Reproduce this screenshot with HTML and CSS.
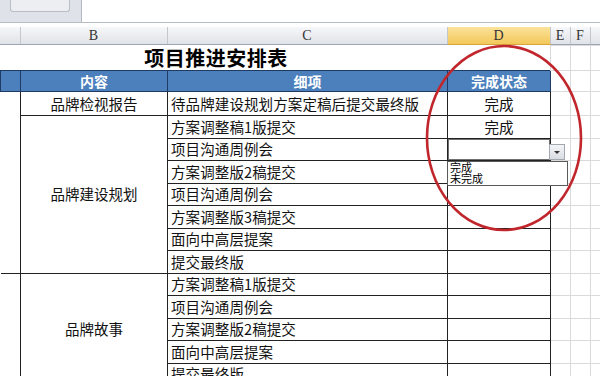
FILE: index.html
```html
<!DOCTYPE html>
<html lang="zh-CN">
  <head>
    <meta charset="UTF-8">
    <meta name="viewport" content="width=device-width, initial-scale=1.0">
    <title>项目推进安排表</title>
    <link rel="stylesheet" href="styles.css">
  </head>
  <body>
    <div class="sheet">
      <!-- ribbon remains / name box strip -->
      <div class="topbar">
        <div class="namebox"><div class="tab"></div></div>
      </div>

      <!-- column letters -->
      <table class="grid colheads">
        <colgroup>
          <col class="c-a"><col class="c-b"><col class="c-c"><col class="c-d"><col class="c-e"><col class="c-f"><col class="c-g">
        </colgroup>
        <tr>
          <th></th><th>B</th><th>C</th><th class="sel">D</th><th>E</th><th>F</th><th>G</th>
        </tr>
      </table>

      <!-- worksheet body -->
      <table class="grid cells">
        <colgroup>
          <col class="c-a"><col class="c-b"><col class="c-c"><col class="c-d"><col class="c-e"><col class="c-f"><col class="c-g">
        </colgroup>
        <tr class="title-row">
          <td colspan="3" class="title">项目推进安排表</td>
          <td class="blank"></td><td class="gl"></td><td class="gl"></td><td class="gl"></td>
        </tr>
        <tr class="head-row">
          <td></td><td>内容</td><td>细项</td><td>完成状态</td><td class="gl"></td><td class="gl"></td><td class="gl"></td>
        </tr>

        <tr class="first">
          <td rowspan="8" class="col-a"></td>
          <td class="group">品牌检视报告</td>
          <td class="item">待品牌建设规划方案定稿后提交最终版</td>
          <td class="state">完成</td>
          <td class="gl"></td><td class="gl"></td><td class="gl"></td>
        </tr>
        <tr>
          <td rowspan="7" class="group">品牌建设规划</td>
          <td class="item">方案调整稿1版提交</td>
          <td class="state">完成</td>
          <td class="gl"></td><td class="gl"></td><td class="gl"></td>
        </tr>
        <tr>
          <td class="item">项目沟通周例会</td>
          <td class="state active"></td>
          <td class="gl"></td><td class="gl"></td><td class="gl"></td>
        </tr>
        <tr>
          <td class="item">方案调整版2稿提交</td>
          <td class="state"></td>
          <td class="gl"></td><td class="gl"></td><td class="gl"></td>
        </tr>
        <tr>
          <td class="item">项目沟通周例会</td>
          <td class="state"></td>
          <td class="gl"></td><td class="gl"></td><td class="gl"></td>
        </tr>
        <tr>
          <td class="item">方案调整版3稿提交</td>
          <td class="state"></td>
          <td class="gl"></td><td class="gl"></td><td class="gl"></td>
        </tr>
        <tr>
          <td class="item">面向中高层提案</td>
          <td class="state"></td>
          <td class="gl"></td><td class="gl"></td><td class="gl"></td>
        </tr>
        <tr>
          <td class="item">提交最终版</td>
          <td class="state"></td>
          <td class="gl"></td><td class="gl"></td><td class="gl"></td>
        </tr>

        <tr>
          <td rowspan="5" class="col-a"></td>
          <td rowspan="5" class="group">品牌故事</td>
          <td class="item">方案调整稿1版提交</td>
          <td class="state"></td>
          <td class="gl"></td><td class="gl"></td><td class="gl"></td>
        </tr>
        <tr>
          <td class="item">项目沟通周例会</td>
          <td class="state"></td>
          <td class="gl"></td><td class="gl"></td><td class="gl"></td>
        </tr>
        <tr>
          <td class="item">方案调整版2稿提交</td>
          <td class="state"></td>
          <td class="gl"></td><td class="gl"></td><td class="gl"></td>
        </tr>
        <tr>
          <td class="item">面向中高层提案</td>
          <td class="state"></td>
          <td class="gl"></td><td class="gl"></td><td class="gl"></td>
        </tr>
        <tr>
          <td class="item">提交最终版</td>
          <td class="state"></td>
          <td class="gl"></td><td class="gl"></td><td class="gl"></td>
        </tr>
      </table>

      <!-- data validation dropdown -->
      <div class="dd-button"><span class="dd-arrow"></span></div>
      <div class="dd-list">
        <div>完成</div>
        <div>未完成</div>
      </div>

      <!-- red marker ellipse drawn over the sheet -->
      <svg class="marker" width="600" height="376" viewBox="0 0 600 376">
        <ellipse cx="504" cy="138" rx="77" ry="92" fill="none" stroke="#c0262c" stroke-width="2.6"/>
      </svg>
    </div>
  </body>
</html>
```

FILE: styles.css
```css
/* Excel-ish sheet */
body {
  margin: 0;
  background: #ffffff;
  font-family: "Noto Sans CJK SC", "Noto Sans", sans-serif;
  color: #111;
  overflow: hidden;
}

.sheet {
  position: relative;
  width: 600px;
  height: 376px;
  overflow: hidden;
}

/* top strip */
.topbar {
  height: 22px;
  border-bottom: 1px solid #b8bdc4;
  margin-bottom: 4px;
}

.namebox {
  width: 81px;
  height: 22px;
  background: #dfe3e9;
  border-right: 1px solid #b3b9c1;
  position: relative;
}

.tab {
  width: 58px;
  height: 11px;
  margin-left: 10px;
  background: #eceef2;
  border: 1px solid #b9bec6;
  border-top: none;
  border-radius: 0 0 3px 3px;
}

/* shared grid */
.grid {
  border-collapse: collapse;
  table-layout: fixed;
  width: 660px;
}

.c-a { width: 20px; }
.c-b { width: 147px; }
.c-c { width: 280px; }
.c-d { width: 103px; }
.c-e { width: 20px; }
.c-f { width: 20px; }
.c-g { width: 70px; }

/* column letters */
.colheads th {
  height: 17px;
  padding: 0;
  line-height: 16px;
  font-family: "Liberation Serif", serif;
  font-weight: normal;
  font-size: 14px;
  color: #333;
  background: linear-gradient(#f6f7f9, #dfe2e7);
  border-right: 1px solid #c3c8cf;
  border-bottom: 1px solid #9aa6b4;
}

.colheads th.sel {
  background: linear-gradient(#fbe39a, #f2c75a);
  border-bottom: 1px solid #d9a33a;
}

/* cells */
.cells td {
  padding: 0;
  height: 21.5px;
  line-height: 18px;
  font-size: 14.5px;
  white-space: nowrap;
  overflow: hidden;
}

.cells td.gl {
  border: 1px solid #dadada;
}

.cells .title-row td {
  height: 24px;
}

.cells td.title {
  text-align: center;
  font-weight: bold;
  font-size: 20px;
  line-height: 22px;
  letter-spacing: 0.5px;
  padding-right: 16px;
  color: #000;
  overflow: visible;
}

.cells .head-row td {
  height: 20px;
  background: #4c80bd;
  color: #fff;
  font-weight: bold;
  font-size: 14px;
  text-align: center;
  border: 1px solid #1f3b63;
}

.cells .head-row td.gl {
  background: #fff;
  border: 1px solid #dadada;
}

.cells .first td {
  height: 23px;
}

.col-a {
  border-bottom: 1px solid #222;
}

.group,
.item,
.state {
  border: 1px solid #222;
}

.group {
  text-align: center;
}

.cells td.item {
  padding-left: 3px;
  letter-spacing: 0.1px;
}

.state {
  text-align: center;
}

.state.active {
  box-shadow: inset 0 0 0 1px #707070;
}

/* dropdown */
.dd-button {
  position: absolute;
  left: 549px;
  top: 144px;
  width: 14px;
  height: 14px;
  background: linear-gradient(#f4f5f7, #d9dce1);
  border: 1px solid #a3a8b0;
  display: flex;
  align-items: center;
  justify-content: center;
}

.dd-arrow {
  width: 0;
  height: 0;
  border-left: 3px solid transparent;
  border-right: 3px solid transparent;
  border-top: 3px solid #333;
}

.dd-list {
  position: absolute;
  left: 447px;
  top: 161px;
  width: 117px;
  height: 23px;
  padding-left: 2px;
  background: #fff;
  border: 1px solid #5a5a5a;
  font-size: 11px;
  line-height: 11px;
  color: #000;
}

.marker {
  position: absolute;
  left: 0;
  top: 0;
  pointer-events: none;
}
```
